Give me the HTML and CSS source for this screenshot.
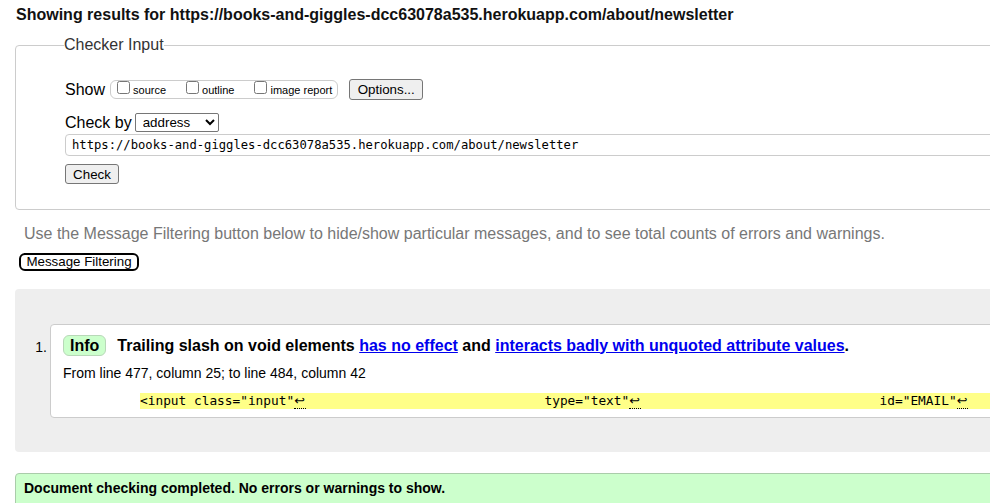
FILE: index.html
```html
<!DOCTYPE html>
<html lang="en">
<head>
<meta charset="utf-8">
<title>Nu Html Checker</title>
<link rel="stylesheet" href="styles.css">
</head>
<body>
<div class="page">
  <h2 class="title">Showing results for https://books-and-giggles-dcc63078a535.herokuapp.com/about/newsletter</h2>
  <form class="checker">
    <fieldset class="checker-fs">
      <legend class="checker-legend">Checker Input</legend>
      <div class="row show-row">
        <span class="row-label">Show</span>
        <span class="opts">
          <label class="opt"><input type="checkbox"><span>source</span></label>
          <label class="opt"><input type="checkbox"><span>outline</span></label>
          <label class="opt"><input type="checkbox"><span>image report</span></label>
        </span>
        <button type="button" class="btn options">Options...</button>
      </div>
      <div class="row by-row">
        <span class="row-label by-label">Check by</span>
        <select class="by"><option>address</option></select>
      </div>
      <input class="url" type="text" value="https://books-and-giggles-dcc63078a535.herokuapp.com/about/newsletter">
      <button type="button" class="btn check">Check</button>
    </fieldset>
  </form>
  <p class="hint">Use the Message Filtering button below to hide/show particular messages, and to see total counts of errors and warnings.</p>
  <button type="button" class="filter">Message Filtering</button>
  <div class="results">
    <ol class="msgs">
      <li class="msg">
        <span class="num">1.</span>
        <div class="card">
          <p class="msg-head"><span class="badge">Info</span><span>Trailing slash on void elements <a href="#">has no effect</a> and <a href="#">interacts badly with unquoted attribute values</a>.</span></p>
          <p class="loc">From line 477, column 25; to line 484, column 42</p>
          <p class="extract"><code>          <mark>&lt;input class="input"<span class="lf">↩</span>                               type="text"<span class="lf">↩</span>                               id="EMAIL"<span class="lf">↩</span></mark></code></p>
        </div>
      </li>
    </ol>
  </div>
  <p class="done">Document checking completed. No errors or warnings to show.</p>
</div>
</body>
</html>
```
FILE: styles.css
```css
html {
  overflow: hidden;
}

body {
  margin: 0;
  background: #fff;
  color: #000;
  font-family: "Liberation Sans", Arial, sans-serif;
}

.page {
  width: 1350px;
}

.title {
  margin: 0;
  padding: 6px 0 0 16px;
  font-size: 16px;
  line-height: 18px;
  font-weight: bold;
  color: #111;
}

.checker {
  margin: 12px 0 0 15px;
}

.checker-fs {
  margin: 0;
  min-width: 0;
  border: 1px solid #ccc;
  border-radius: 4px;
  padding: 25px 0 25px 49px;
}

.checker-legend {
  margin-left: -1px;
  padding: 0;
  font-size: 16px;
  line-height: 18px;
  color: #333;
}

.row {
  display: flex;
  align-items: center;
}

.show-row {
  height: 21px;
}

.row-label {
  font-size: 16px;
  line-height: 18px;
  margin-right: 5px;
  white-space: nowrap;
}

.by-label {
  margin-right: 3px;
}

.opts {
  display: flex;
  align-items: flex-start;
  box-sizing: border-box;
  height: 19px;
  border: 1px solid #ccc;
  border-radius: 6px;
  padding: 0 5px 0 6px;
}

.opt {
  display: flex;
  align-items: flex-start;
  margin-right: 20px;
}

.opt:last-child {
  margin-right: 0;
}

.opt input {
  margin: 0 3px 0 0;
  width: 13px;
  height: 13px;
}

.opt span {
  font-size: 11px;
  line-height: 13px;
  margin-top: 3px;
  white-space: nowrap;
}

.btn {
  box-sizing: border-box;
  padding: 0;
  font-family: "Liberation Sans", Arial, sans-serif;
  font-size: 13.33px;
  color: #000;
  background: #efefef;
  border: 1px solid #767676;
  border-radius: 3px;
}

.options {
  margin-left: 11px;
  width: 74px;
  height: 21px;
}

.by-row {
  margin-top: 13px;
  height: 19px;
}

.by {
  box-sizing: border-box;
  width: 84px;
  height: 19px;
  padding: 0 0 0 3px;
  font-family: "Liberation Sans", Arial, sans-serif;
  font-size: 13.33px;
  color: #000;
  background-color: #fff;
  border: 1px solid #767676;
  border-radius: 2px;
}

.url {
  display: block;
  box-sizing: border-box;
  margin: 2px 0 0;
  width: 100%;
  height: 22px;
  padding: 0 6px;
  border: 1px solid #ccc;
  border-radius: 4px;
  font-family: "DejaVu Sans Mono", monospace;
  font-size: 12.2px;
  color: #000;
}

.check {
  display: block;
  margin-top: 8px;
  width: 54px;
  height: 20px;
}

.hint {
  margin: 15px 0 0;
  padding-left: 24px;
  font-size: 16px;
  line-height: 18px;
  color: #777;
}

.filter {
  display: block;
  box-sizing: border-box;
  margin: 10px 0 0 19px;
  width: 120px;
  height: 18px;
  padding: 0;
  border: 2px solid #000;
  border-radius: 6px;
  background: #fff;
  color: #000;
  font-family: "Liberation Sans", Arial, sans-serif;
  font-size: 13.33px;
  line-height: 14px;
}

.results {
  margin: 18px 0 0 15px;
  padding: 35px 0 34px;
  background: #eee;
  border-radius: 4px;
}

.msgs {
  list-style: none;
  margin: 0;
  padding: 0;
}

.msg {
  display: flex;
  align-items: flex-start;
}

.num {
  flex: none;
  box-sizing: border-box;
  width: 36px;
  padding-right: 4px;
  margin-top: 14px;
  text-align: right;
  font-size: 14px;
  line-height: 18px;
}

.card {
  flex: 1;
  min-width: 0;
  background: #fff;
  border: 1px solid #ccc;
  border-radius: 4px;
  padding: 10px 12px 10px 12px;
  margin-left: -1px;
}

.msg-head {
  display: flex;
  align-items: center;
  margin: 0;
  height: 21px;
  font-size: 16px;
  line-height: 18px;
  font-weight: bold;
  white-space: nowrap;
}

.badge {
  box-sizing: border-box;
  height: 21px;
  line-height: 19px;
  padding: 0 6px;
  margin-right: 11px;
  background: #cfc;
  border: 1px solid #b8d8b8;
  border-radius: 6px;
}

.msg-head a {
  color: #0000ee;
  text-decoration: underline;
}

.loc {
  margin: 9px 0 0;
  font-size: 14px;
  line-height: 16px;
}

.extract {
  margin: 10px 0 0;
  height: 16px;
  white-space: nowrap;
}

.extract code {
  font-family: "DejaVu Sans Mono", monospace;
  font-size: 12.8px;
  line-height: 16px;
  white-space: pre;
}

.extract mark {
  display: inline-block;
  line-height: 16px;
  padding-right: 300px;
  background: #ff8;
  color: #000;
}

.lf {
  display: inline-block;
  vertical-align: top;
  box-sizing: border-box;
  width: 11.5px;
  height: 16px;
  border-bottom: 1px dotted #000;
  font-family: "DejaVu Sans", sans-serif;
}

.done {
  margin: 21px 0 0 15px;
  padding: 6px 8px 10px;
  background: #cfc;
  border: 1px solid #aca;
  border-radius: 4px;
  font-size: 14px;
  line-height: 16px;
  font-weight: bold;
}
```
